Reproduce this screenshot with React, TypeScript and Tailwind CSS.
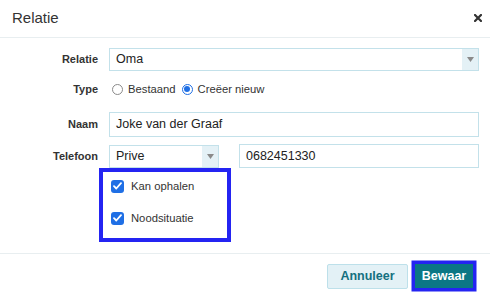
import React from "react";

function Arrow() {
  return (
    <svg width="7" height="5" viewBox="0 0 7 5">
      <path d="M0 0h7L3.5 5z" fill="#8a8a8a" />
    </svg>
  );
}

function Select({ value, width }: { value: string; width: string }) {
  return (
    <div className={`flex h-[23px] border border-[#c3e1ea] bg-white ${width}`}>
      <span className="flex flex-1 items-center pl-[6px] text-[12.5px] text-[#222]">{value}</span>
      <span className="flex w-[16px] items-center justify-center bg-[#e4f1f6]">
        <Arrow />
      </span>
    </div>
  );
}

function Input({ value, width }: { value: string; width: string }) {
  return (
    <div className={`flex h-[24px] items-center border border-[#c3e1ea] bg-white pl-[6px] text-[12.5px] text-[#222] ${width}`}>
      {value}
    </div>
  );
}

function Radio({ checked, label }: { checked?: boolean; label: string }) {
  return (
    <label className="flex items-center gap-[5px]">
      {checked ? (
        <span className="flex h-[11px] w-[11px] items-center justify-center rounded-full border border-[#1f6fe5] bg-white">
          <span className="h-[6px] w-[6px] rounded-full bg-[#1f6fe5]" />
        </span>
      ) : (
        <span className="h-[11px] w-[11px] rounded-full border border-[#8a8a8a] bg-white" />
      )}
      <span className="text-[11.25px] text-[#333]">{label}</span>
    </label>
  );
}

function Check({ label }: { label: string }) {
  return (
    <label className="flex h-[14px] items-center gap-[7px]">
      <span className="flex h-[13px] w-[13px] items-center justify-center rounded-[3px] bg-[#1f6fe5]">
        <svg width="9" height="8" viewBox="0 0 9 8">
          <path d="M1 4.2l2.3 2.3L8 1.2" fill="none" stroke="#fff" strokeWidth="1.8" strokeLinecap="round" strokeLinejoin="round" />
        </svg>
      </span>
      <span className="text-[11.25px] text-[#333]">{label}</span>
    </label>
  );
}

function Row({ label, children, className = "" }: { label: string; children: React.ReactNode; className?: string }) {
  return (
    <div className={`flex items-center pr-[11px] ${className}`}>
      <span className="w-[99px] pr-[1px] text-right text-[11px] font-bold text-[#333]">{label}</span>
      <div className="ml-[10px] flex flex-1 items-center">{children}</div>
    </div>
  );
}

export default function App() {
  return (
    <div className="h-[301px] w-[490px] bg-white font-['Liberation_Sans',Arial,sans-serif] text-[#333]">
      {/* Header */}
      <div className="flex h-[38px] items-center justify-between border-b border-[#e8eef0] pl-[12px] pr-[8px]">
        <span className="text-[15px] text-[#333]">Relatie</span>
        <svg width="8" height="8" viewBox="0 0 8 8" className="mb-[1px]">
          <path d="M1 1l6 6M7 1L1 7" stroke="#333" strokeWidth="2.2" strokeLinecap="square" />
        </svg>
      </div>

      {/* Body */}
      <div className="flex flex-col pt-[10px]">
        <Row label="Relatie">
          <Select value="Oma" width="flex-1" />
        </Row>
        <Row label="Type" className="mt-[9px] h-[18px]">
          <div className="flex items-center gap-[6px] pl-[3px]">
            <Radio label="Bestaand" />
            <Radio checked label="Creëer nieuw" />
          </div>
        </Row>
        <Row label="Naam" className="mt-[14px]">
          <Input value="Joke van der Graaf" width="h-[25px] flex-1" />
        </Row>
        <Row label="Telefoon" className="mt-[7px]">
          <Select value="Prive" width="w-[110px]" />
          <Input value="0682451330" width="ml-[20px] flex-1" />
        </Row>
        <div className="ml-[99px] flex h-[74px] w-[132px] flex-col gap-[18px] border-4 border-[#2424f2] pl-[8px] pt-[7px]">
          <Check label="Kan ophalen" />
          <Check label="Noodsituatie" />
        </div>
      </div>

      {/* Footer */}
      <div className="mt-[11px] flex justify-end gap-[7px] border-t border-[#e8eef0] pr-[17px] pt-[10px]">
        <button className="h-[25px] w-[81px] rounded-[2px] border border-[#bde0ea] bg-[#e3f1f6] text-[12.5px] font-bold text-[#14707f]">
          Annuleer
        </button>
        <button className="h-[24px] w-[58px] bg-[#0b7785] text-[12.5px] font-bold text-white ring-[3.5px] ring-[#2424f2]">
          Bewaar
        </button>
      </div>
    </div>
  );
}
